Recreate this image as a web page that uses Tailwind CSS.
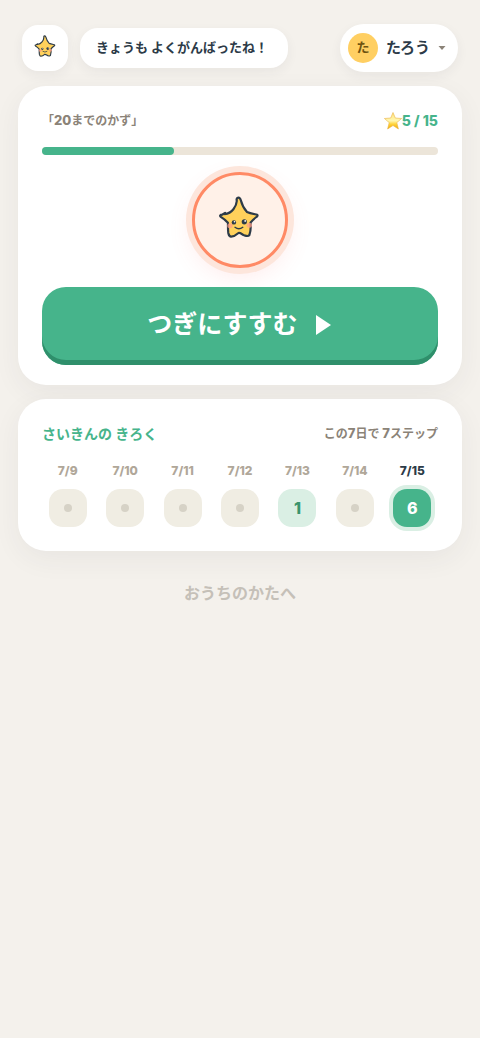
<!DOCTYPE html>
<html lang="ja">
<head>
<meta charset="utf-8">
<meta name="viewport" content="width=device-width, initial-scale=1">
<title>きょうの がくしゅう</title>
<script src="https://cdn.jsdelivr.net/npm/@tailwindcss/browser@4"></script>
</head>
<body class="min-h-screen bg-[#f4f1ec] font-['Inter','Noto_Sans_CJK_JP',sans-serif] font-bold text-[#2d3b48]">
<svg class="hidden" aria-hidden="true">
  <symbol id="star" viewBox="0 0 40 42">
    <path d="M19.6 1.6C21 1.6 21.5 3.2 21.9 4.5C23 8.8 25 12.9 28 16C31.1 17.4 35.1 18 38.2 18.7C38.9 19.4 38.4 20.5 37.4 21C35.3 22.6 33.1 24.4 31.5 26.6C32 30.8 31.6 35.3 30.4 39C29 41 27 39.8 25.2 39.3C23.3 38.6 21.3 36.5 19.5 37C17.5 38.8 14.8 40.5 12.1 40.6C10 40.7 9.8 38.8 9.3 37C8.8 33.5 9.1 30 8.9 26.8C6.9 24.5 4.3 22.4 1.8 20.9C.4 19.6 1.4 18.8 3.1 18.7L6.1 16.9L5.6 18.1C8.8 17.8 12.6 15.6 14.4 13.3C16.3 10.8 17.6 8 17.8 5L17.6 3.5C17.8 2.3 18.6 1.6 19.6 1.6Z" fill="#ffd15b" stroke="#2d3b48" stroke-width="2.2" stroke-linejoin="round"/>
    <ellipse cx="11" cy="29.8" rx="2.7" ry="2.5" fill="#ff9d86" opacity=".75"/>
    <ellipse cx="30.3" cy="29.3" rx="2.7" ry="2.5" fill="#ff9d86" opacity=".75"/>
    <circle cx="14.9" cy="26.4" r="2.2" fill="#2d3b48"/>
    <circle cx="25.3" cy="25.8" r="2.6" fill="#2d3b48"/>
    <circle cx="15.5" cy="25.7" r=".8" fill="#fff"/>
    <circle cx="26.2" cy="24.9" r=".9" fill="#fff"/>
    <path d="M16 31.3Q19.8 34.2 23.8 31.3" fill="none" stroke="#2d3b48" stroke-width="1.4" stroke-linecap="round"/>
  </symbol>
</svg>
<div class="flex flex-col px-[18px] pt-6">
  <header class="flex items-center justify-between px-1">
    <div class="flex items-center gap-3">
      <button type="button" aria-label="ほし" class="flex size-[46px] items-center justify-center rounded-2xl bg-white shadow-[0_4px_12px_rgba(45,59,72,0.06)]">
        <svg class="mb-1 h-[22px] w-6"><use href="#star"/></svg>
      </button>
      <p class="flex h-10 items-center rounded-[18px] bg-white pr-5 pl-4 text-[13px] whitespace-nowrap shadow-[0_4px_12px_rgba(45,59,72,0.06)]">きょうも よくがんばったね！</p>
    </div>
    <button type="button" class="flex h-12 items-center gap-2 rounded-full bg-white pr-3 pl-2 shadow-[0_4px_12px_rgba(45,59,72,0.06)]">
      <span class="flex size-[30px] items-center justify-center rounded-full bg-[#ffcf62] text-[13px] text-[#6e5310]">た</span>
      <span class="text-[15px]">たろう</span>
      <svg class="h-1 w-2" viewBox="0 0 8 4" aria-hidden="true"><path d="M.5 0H7.5L4 4Z" fill="#8b8378"/></svg>
    </button>
  </header>

  <main>
    <section class="mt-3.5 flex flex-col rounded-[28px] bg-white p-6 pb-5 shadow-[0_8px_28px_rgba(45,59,72,0.06)]">
      <div class="flex h-[22px] items-center justify-between">
        <h1 class="text-xs text-[#8b8378]">「<span class="text-[13px] font-extrabold">20</span>までのかず」</h1>
        <p class="flex items-center text-sm font-extrabold text-[#46b48b]">
          <svg class="size-[18px]" viewBox="0 0 18 18" aria-hidden="true">
            <defs><linearGradient id="gold" x1="0" y1="0" x2="0" y2="1"><stop offset="0" stop-color="#ffe27a"/><stop offset=".5" stop-color="#fff7b0"/><stop offset=".7" stop-color="#ffd43d"/><stop offset="1" stop-color="#f2a900"/></linearGradient></defs>
            <path d="M9 .5L11.3 6L17.6 6.5L12.8 10.6L14.4 17L9 13.5L3.6 17L5.2 10.6L.4 6.5L6.7 6Z" fill="url(#gold)" stroke="#e9b44a" stroke-width=".6" stroke-linejoin="round"/>
          </svg>5 / 15</p>
      </div>
      <div role="progressbar" aria-label="すすみぐあい" aria-valuemin="0" aria-valuemax="15" aria-valuenow="5" class="mt-[15px] h-2 rounded-full bg-[#ece5d9]">
        <div class="h-full rounded-full bg-[#46b48b]" style="width:33.333%"></div>
      </div>
      <div class="mt-[17px] flex size-24 items-center justify-center self-center rounded-full border-3 border-[#ff8a65] bg-[#fff1e8] shadow-[0_0_0_6px_#fde6dc,0_8px_24px_rgba(255,107,107,0.14)]">
        <svg class="mr-0.5 mb-1.5 h-[42px] w-10" aria-hidden="true"><use href="#star"/></svg>
      </div>
      <button type="button" class="mt-[19px] flex h-[78px] items-center justify-center gap-[18px] rounded-3xl bg-[#46b48b] pr-0.5 pb-[3px] text-[25px] text-white shadow-[inset_0_-5px_0_#2f8f6b]">
        <span>つぎにすすむ</span>
        <svg class="h-5 w-[15px]" viewBox="0 0 15 20" aria-hidden="true"><path d="M0 0L15 10L0 20Z" fill="#fff"/></svg>
      </button>
    </section>

    <section class="mt-3.5 rounded-[28px] bg-white p-6 shadow-[0_8px_28px_rgba(45,59,72,0.06)]">
      <div class="flex h-[22px] items-center justify-between">
        <h2 class="text-sm text-[#46b48b]">さいきんの きろく</h2>
        <p class="text-xs text-[#8b8378]">この<span class="text-[13px] font-extrabold">7</span>日で <span class="text-[13px] font-extrabold">7</span>ステップ</p>
      </div>
      <ol class="mt-[18px] grid grid-cols-7 gap-1.5 text-center text-xs font-extrabold text-[#b0a799]">
        <li class="flex flex-col items-center gap-2.5"><span>7/9</span><span class="flex size-[38px] items-center justify-center rounded-[14px] bg-[#f0ede3]"><i class="size-2 rounded-full bg-[#d6d2c6]"></i></span></li>
        <li class="flex flex-col items-center gap-2.5"><span>7/10</span><span class="flex size-[38px] items-center justify-center rounded-[14px] bg-[#f0ede3]"><i class="size-2 rounded-full bg-[#d6d2c6]"></i></span></li>
        <li class="flex flex-col items-center gap-2.5"><span>7/11</span><span class="flex size-[38px] items-center justify-center rounded-[14px] bg-[#f0ede3]"><i class="size-2 rounded-full bg-[#d6d2c6]"></i></span></li>
        <li class="flex flex-col items-center gap-2.5"><span>7/12</span><span class="flex size-[38px] items-center justify-center rounded-[14px] bg-[#f0ede3]"><i class="size-2 rounded-full bg-[#d6d2c6]"></i></span></li>
        <li class="flex flex-col items-center gap-2.5"><span>7/13</span><span class="flex size-[38px] items-center justify-center rounded-[14px] bg-[#daefe4] text-base font-extrabold text-[#3a946c]">1</span></li>
        <li class="flex flex-col items-center gap-2.5"><span>7/14</span><span class="flex size-[38px] items-center justify-center rounded-[14px] bg-[#f0ede3]"><i class="size-2 rounded-full bg-[#d6d2c6]"></i></span></li>
        <li class="flex flex-col items-center gap-2.5"><span class="text-[#2d3b48]">7/15</span><span class="flex size-[38px] items-center justify-center rounded-[14px] bg-[#46b48b] text-base font-extrabold text-white ring-4 ring-[#daefe4]">6</span></li>
      </ol>
    </section>
  </main>

  <footer class="mt-[30px] text-center">
    <a href="#" class="text-base text-[#c5c0b8]">おうちのかたへ</a>
  </footer>
</div>
</body>
</html>
